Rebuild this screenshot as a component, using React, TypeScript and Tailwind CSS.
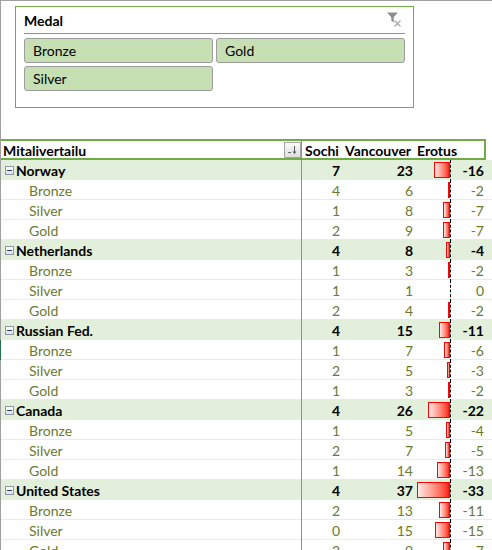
import React from 'react';

type Row = { label: string; sochi: number; van: number; diff: number };
type Country = Row & { medals: Row[] };

const data: Country[] = [
  {
    label: 'Norway', sochi: 7, van: 23, diff: -16,
    medals: [
      { label: 'Bronze', sochi: 4, van: 6, diff: -2 },
      { label: 'Silver', sochi: 1, van: 8, diff: -7 },
      { label: 'Gold', sochi: 2, van: 9, diff: -7 },
    ],
  },
  {
    label: 'Netherlands', sochi: 4, van: 8, diff: -4,
    medals: [
      { label: 'Bronze', sochi: 1, van: 3, diff: -2 },
      { label: 'Silver', sochi: 1, van: 1, diff: 0 },
      { label: 'Gold', sochi: 2, van: 4, diff: -2 },
    ],
  },
  {
    label: 'Russian Fed.', sochi: 4, van: 15, diff: -11,
    medals: [
      { label: 'Bronze', sochi: 1, van: 7, diff: -6 },
      { label: 'Silver', sochi: 2, van: 5, diff: -3 },
      { label: 'Gold', sochi: 1, van: 3, diff: -2 },
    ],
  },
  {
    label: 'Canada', sochi: 4, van: 26, diff: -22,
    medals: [
      { label: 'Bronze', sochi: 1, van: 5, diff: -4 },
      { label: 'Silver', sochi: 2, van: 7, diff: -5 },
      { label: 'Gold', sochi: 1, van: 14, diff: -13 },
    ],
  },
  {
    label: 'United States', sochi: 4, van: 37, diff: -33,
    medals: [
      { label: 'Bronze', sochi: 2, van: 13, diff: -11 },
      { label: 'Silver', sochi: 0, van: 15, diff: -15 },
      { label: 'Gold', sochi: 2, van: 9, diff: -7 },
    ],
  },
];

const font = { fontFamily: 'Lato, "Liberation Sans", sans-serif' };

export default function App() {
  return (
    <div className="w-[492px] h-[550px] overflow-hidden bg-white border-t border-[#a0a0a0] text-[14px] text-black" style={font}>
      {/* Slicer area */}
      <div className="border-l border-[#a0a0a0] pt-[5px] pb-[31px] pl-[14px]">
        <Slicer />
      </div>

      {/* Pivot header */}
      <div className="flex border-l border-[#a0a0a0]">
        <div className="w-[485px] h-[21px] border-y-2 border-r-2 border-[#70ad47] grid grid-cols-[301px_39px_72px_1fr] font-bold">
          <div className="flex justify-between items-start border-r border-[#70ad47] pl-[2px]">
            <span className="leading-[20px] whitespace-nowrap">Mitalivertailu</span>
            <SortButton />
          </div>
          <div className="pl-[3px] leading-[20px]">Sochi</div>
          <div className="pl-[4px] leading-[20px]">Vancouver</div>
          <div className="pl-[4px] leading-[20px]">Erotus</div>
        </div>
      </div>

      {/* Pivot body */}
      {data.map((c, ci) => (
        <div key={c.label}>
          <DataRow row={c} country />
          {c.medals.map((m, mi) => (
            <DataRow key={m.label} row={m} mark={ci === 2 && mi === 0} />
          ))}
        </div>
      ))}
    </div>
  );
}

function Slicer() {
  return (
    <div className="w-[399px] h-[102px] border border-[#70ad47] px-[8px]">
      <div className="h-[27px] border-b border-[#70ad47] flex justify-between items-start">
        <span className="pt-[5px] leading-[17px] font-bold">Medal</span>
        <ClearFilterIcon />
      </div>
      <div className="mt-[4px] grid grid-cols-2 gap-[3px]">
        {['Bronze', 'Gold', 'Silver'].map((m) => (
          <div key={m} className="h-[25px] flex items-center pl-[8px] bg-[#c6e0b4] border border-[#9c9c9c] rounded-[3px]">
            {m}
          </div>
        ))}
      </div>
    </div>
  );
}

function ClearFilterIcon() {
  return (
    <svg width="17" height="17" viewBox="0 0 17 17" className="mt-[4px] mr-[2px]">
      <path d="M1 1.5h11l-4.3 4.8v5.2l-2.4-1.8V6.3z" fill="#8e8e8e" />
      <path d="M8.5 9.5l6 6M14.5 9.5l-6 6" stroke="#a8a8a8" strokeWidth="1.3" />
    </svg>
  );
}

function SortButton() {
  return (
    <div className="mt-[1px] w-[17px] h-[16px] border border-[#a6a6a6] bg-gradient-to-b from-[#fafafa] to-[#dedede] flex items-center justify-center">
      <svg width="13" height="12" viewBox="0 0 13 12">
        <path d="M2 8.5h3" stroke="#6b6b6b" strokeWidth="1" />
        <path d="M8.5 2v7.5" stroke="#5a5a5a" strokeWidth="1" />
        <path d="M6.5 7.5l2 2.5 2-2.5z" fill="#5a5a5a" />
      </svg>
    </div>
  );
}

function MinusBox() {
  return (
    <div className="w-[9px] h-[9px] border border-[#8c99ad] bg-gradient-to-b from-[#ffffff] to-[#dde3ea] flex items-center justify-center">
      <div className="w-[5px] h-[1px] bg-[#2b3f66]" />
    </div>
  );
}

function DataRow({ row, country = false, mark = false }: { row: Row; country?: boolean; mark?: boolean }) {
  const w = Math.abs(row.diff);
  return (
    <div className={`flex border-l ${mark ? 'border-[#217346]' : 'border-[#a0a0a0]'}`}>
      <div
        className={`w-[491px] h-[20px] grid grid-cols-[301px_39px_72px_38px_33px_1fr] ${
          country ? 'bg-[#e2efda] font-bold text-black' : 'bg-white text-[#6b7a2f] border-b border-[#e2efda]'
        }`}
      >
        <div className="border-r border-[#70ad47] flex items-start">
          {country ? (
            <>
              <div className="ml-[4px] mt-[6px]">
                <MinusBox />
              </div>
              <span className="ml-[2px] leading-[22px] whitespace-nowrap">{row.label}</span>
            </>
          ) : (
            <span className="ml-[28px] leading-[22px]">{row.label}</span>
          )}
        </div>
        <div className="text-right pr-[1px] leading-[22px]">{row.sochi}</div>
        <div className="text-right leading-[22px]">{row.van}</div>
        <div className="border-r border-dashed border-black flex justify-end items-start">
          {w > 0 && (
            <div
              className={`mt-[2px] h-[16px] ${
                w <= 2 ? 'bg-[#ff0000]' : 'border border-[#ff0000] bg-gradient-to-r from-[#ffe8e8] to-[#ff0a0a]'
              }`}
              style={{ width: `${w}px` }}
            />
          )}
        </div>
        <div className="text-right leading-[22px]">{row.diff}</div>
        <div />
      </div>
    </div>
  );
}
